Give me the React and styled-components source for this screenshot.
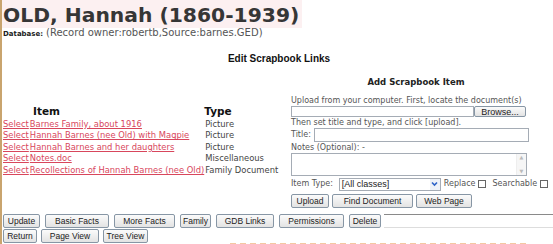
import React from 'react';
import styled, { createGlobalStyle } from 'styled-components';

const GlobalStyle = createGlobalStyle`
  html, body { margin: 0; padding: 0; background: #fff; }
  body { font-family: "DejaVu Sans", Verdana, sans-serif; }
`;

const items = [
  { title: 'Barnes Family, about 1916', type: 'Picture' },
  { title: 'Hannah Barnes (nee Old) with Magpie', type: 'Picture' },
  { title: 'Hannah Barnes and her daughters', type: 'Picture' },
  { title: 'Notes.doc', type: 'Miscellaneous' },
  { title: 'Recollections of Hannah Barnes (nee Old)', type: 'Family Document' },
];

const Page = styled.div`
  width: 553px;
  height: 244px;
  box-sizing: border-box;
  border-left: 2px solid #c9a46e;
  overflow: hidden;
`;

const TitleBar = styled.h1`
  display: inline-block;
  margin: 0;
  padding: 0 3px 0 1px;
  height: 28px;
  line-height: 30px;
  font-size: 20.3px;
  font-weight: bold;
  color: #363636;
  background: #fcf0f1;
  white-space: nowrap;
`;

const DbLine = styled.div`
  height: 11px;
  line-height: 10px;
  padding-left: 1px;
  font-size: 10px;
  color: #555;
  white-space: nowrap;
`;

const DbLabel = styled.b`
  font-size: 7px;
  color: #222;
  margin-right: 3px;
`;

const SectionTitle = styled.div`
  margin-top: 14px;
  text-align: center;
  padding-left: 3px;
  font-family: "Liberation Sans", Arial, sans-serif;
  font-weight: bold;
  font-size: 10px;
  color: #111;
  height: 14px;
`;

const Main = styled.div`
  display: grid;
  grid-template-columns: 287px 1fr;
  margin-top: 10px;
`;

const ItemsTable = styled.table`
  border-collapse: collapse;
  margin-top: 27px;
  margin-left: 1px;
  align-self: start;
  justify-self: start;
  font-size: 8.4px;
  th {
    font-size: 10.5px;
    color: #111;
    text-align: left;
    height: 14px;
    padding: 0;
  }
  td {
    height: 11.5px;
    padding: 0;
    white-space: nowrap;
  }
`;

const HeadItem = styled.th`
  padding-left: 30px !important;
`;

const Link = styled.a`
  color: #d8465c;
  text-decoration: underline;
  cursor: pointer;
  margin-left: ${(p) => p.ml || 0}px;
`;

const TypeCell = styled.td`
  color: #444;
  padding-left: 1px !important;
`;

const Form = styled.div`
  display: flex;
  flex-direction: column;
  padding-left: 2px;
  font-size: 8px;
  color: #555;
`;

const FormTitle = styled.div`
  font-weight: bold;
  font-size: 8.5px;
  color: #222;
  text-align: center;
  width: 250px;
  height: 19px;
  line-height: 11px;
`;

const Line = styled.div`
  height: ${(p) => p.h || 10}px;
  line-height: ${(p) => p.h || 10}px;
  display: flex;
  align-items: center;
  white-space: nowrap;
  margin-top: ${(p) => p.mt || 0}px;
`;

const TextBox = styled.div`
  box-sizing: border-box;
  width: ${(p) => p.w}px;
  height: ${(p) => p.h}px;
  border: 1px solid #a5acb5;
  background: #fff;
  margin-left: ${(p) => p.ml || 0}px;
`;

const TextArea = styled(TextBox)`
  display: flex;
  justify-content: flex-end;
`;

const ScrollBar = styled.div`
  width: 9px;
  border-left: 1px solid #eee;
  background: #f6f6f6;
  display: flex;
  flex-direction: column;
  justify-content: space-between;
  align-items: center;
  font-size: 5px;
  color: #bbb;
  line-height: 7px;
`;

const Select = styled.div`
  box-sizing: border-box;
  width: 102px;
  height: 13px;
  border: 1px solid #a5acb5;
  margin-left: 6px;
  display: flex;
  justify-content: space-between;
  align-items: center;
  font-family: "Liberation Sans", Arial, sans-serif;
  font-size: 9px;
  color: #222;
  padding-left: 2px;
`;

const ArrowBox = styled.span`
  display: flex;
  align-items: center;
  justify-content: center;
  width: 10px;
  height: 11px;
  background: #eef2f8;
`;

const Check = styled.span`
  display: inline-block;
  box-sizing: border-box;
  width: 8px;
  height: 8px;
  border: 1px solid #666;
  background: #fff;
  margin: 0 ${(p) => p.mr || 0}px 0 ${(p) => p.ml || 2}px;
`;

const Button = styled.button`
  box-sizing: border-box;
  width: ${(p) => p.w}px;
  height: ${(p) => p.h || 14}px;
  padding: 0;
  margin: 0;
  border: 1px solid #8796a5;
  border-radius: 2px;
  background: linear-gradient(#fbfbfb, #e3e3e3);
  font-family: "Liberation Sans", Arial, sans-serif;
  font-size: 8.5px;
  color: #222;
  line-height: 10px;
  flex: none;
`;

const ButtonRow = styled.div`
  display: flex;
  gap: ${(p) => p.gap || 4}px;
  margin-top: ${(p) => p.mt || 0}px;
  padding-left: ${(p) => p.pl || 0}px;
`;

const Filler = styled.div`
  flex: 1;
  border-top: 1px solid #8a8a8a;
  border-bottom: 1px solid #ddd;
  margin-left: -2px;
`;

const Dashes = styled.div`
  margin-left: 228px;
  width: 296px;
  border-top: 2px dashed #f4c8a2;
`;

const Chevron = () => (
  <svg width="7" height="6" viewBox="0 0 7 6">
    <path d="M1 1.5 L3.5 4 L6 1.5" fill="none" stroke="#2f64c8" strokeWidth="1.6" />
  </svg>
);

const App = () => (
  <>
    <GlobalStyle />
    <Page>
      <TitleBar>OLD, Hannah (1860-1939)</TitleBar>
      <DbLine>
        <DbLabel>Database:</DbLabel>
        (Record owner:robertb,Source:barnes.GED)
      </DbLine>
      <SectionTitle>Edit Scrapbook Links</SectionTitle>
      <Main>
        <ItemsTable>
          <thead>
            <tr>
              <HeadItem>Item</HeadItem>
              <th>Type</th>
            </tr>
          </thead>
          <tbody>
            {items.map((it) => (
              <tr key={it.title}>
                <td>
                  <Link>Select</Link>
                  <Link ml={1}>{it.title}</Link>
                </td>
                <TypeCell>{it.type}</TypeCell>
              </tr>
            ))}
          </tbody>
        </ItemsTable>
        <Form>
          <FormTitle>Add Scrapbook Item</FormTitle>
          <Line h={9}>Upload from your computer. First, locate the document(s)</Line>
          <Line h={12}>
            <TextBox w={183} h={11} />
            <Button w={52} h={11} style={{ fontSize: 9 }}>Browse...</Button>
          </Line>
          <Line h={11}>Then set title and type, and click [upload].</Line>
          <Line h={14}>
            Title:
            <TextBox w={215} h={14} ml={3} />
          </Line>
          <Line h={11}>Notes (Optional): -</Line>
          <TextArea w={236} h={23}>
            <ScrollBar>
              <span>▲</span>
              <span>▼</span>
            </ScrollBar>
          </TextArea>
          <Line h={14} mt={1}>
            Item Type:
            <Select>
              [All classes]
              <ArrowBox><Chevron /></ArrowBox>
            </Select>
            <span style={{ marginLeft: 3 }}>Replace</span>
            <Check ml={3} mr={6} />
            Searchable
            <Check ml={3} />
          </Line>
          <ButtonRow gap={3} mt={3}>
            <Button w={38}>Upload</Button>
            <Button w={81}>Find Document</Button>
            <Button w={56}>Web Page</Button>
          </ButtonRow>
        </Form>
      </Main>
      <ButtonRow gap={5} mt={6} pl={1}>
        <Button w={37}>Update</Button>
        <Button w={64}>Basic Facts</Button>
        <Button w={61}>More Facts</Button>
        <Button w={31}>Family</Button>
        <Button w={58}>GDB Links</Button>
        <Button w={65}>Permissions</Button>
        <Button w={32}>Delete</Button>
        <Filler />
      </ButtonRow>
      <ButtonRow gap={4} mt={1} pl={1}>
        <Button w={34}>Return</Button>
        <Button w={58}>Page View</Button>
        <Button w={45}>Tree View</Button>
      </ButtonRow>
      <Dashes />
    </Page>
  </>
);

export default App;
